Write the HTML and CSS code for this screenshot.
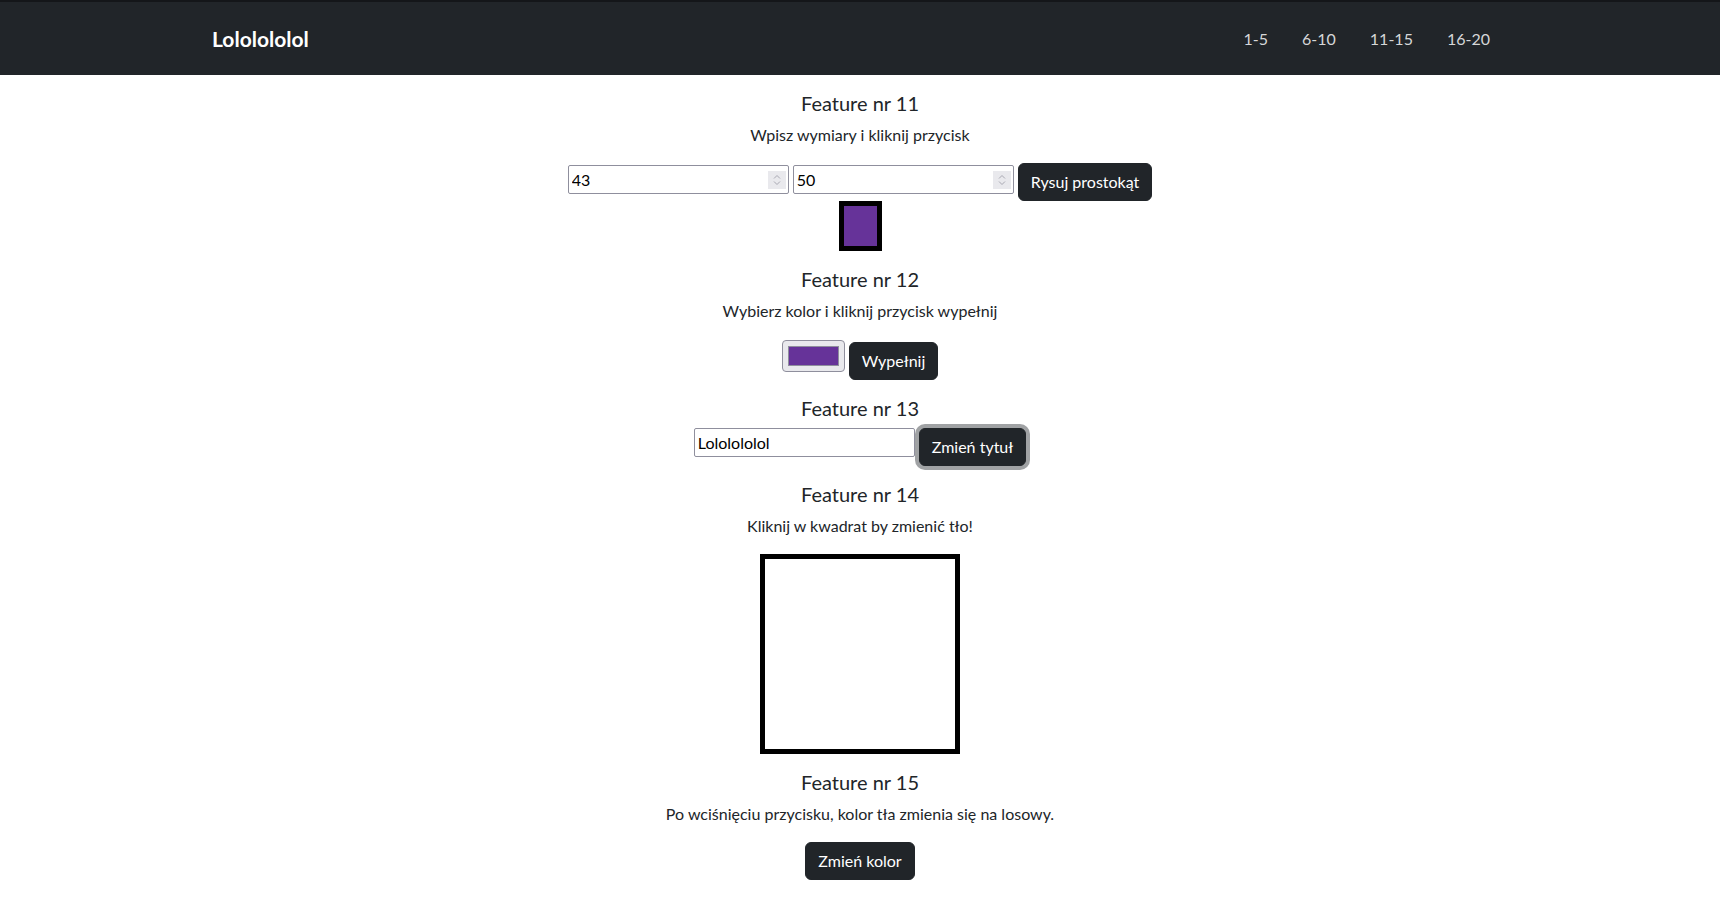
FILE: index.html
```html
<!DOCTYPE html>
<html lang="pl">
<head>
<meta charset="utf-8">
<title>Lololololol</title>
<link rel="stylesheet" href="styles.css">
</head>
<body>
<nav class="navbar">
  <div class="container nav-inner">
    <a class="brand" href="#">Lololololol</a>
    <ul class="nav-links">
      <li><a href="#">1-5</a></li>
      <li><a href="#">6-10</a></li>
      <li><a href="#">11-15</a></li>
      <li><a href="#">16-20</a></li>
    </ul>
  </div>
</nav>
<main class="content">
  <section class="feature">
    <h5 class="title">Feature nr 11</h5>
    <p class="desc">Wpisz wymiary i kliknij przycisk</p>
    <div class="row">
      <span class="num-wrap">
        <input class="field num" type="number" value="43">
        <span class="spin"><svg width="18" height="18" viewBox="0 0 18 18"><path d="M6 7.5 L9 4.5 L12 7.5" fill="none" stroke="#a8a8b2" stroke-width="1"/><path d="M6 10.5 L9 13.5 L12 10.5" fill="none" stroke="#a8a8b2" stroke-width="1"/></svg></span>
      </span>
      <span class="num-wrap">
        <input class="field num" type="number" value="50">
        <span class="spin"><svg width="18" height="18" viewBox="0 0 18 18"><path d="M6 7.5 L9 4.5 L12 7.5" fill="none" stroke="#a8a8b2" stroke-width="1"/><path d="M6 10.5 L9 13.5 L12 10.5" fill="none" stroke="#a8a8b2" stroke-width="1"/></svg></span>
      </span>
      <button class="btn">Rysuj prostokąt</button>
    </div>
    <div class="rect"></div>
  </section>

  <section class="feature">
    <h5 class="title">Feature nr 12</h5>
    <p class="desc">Wybierz kolor i kliknij przycisk wypełnij</p>
    <div class="row row-color">
      <input class="color" type="color" value="#663399">
      <button class="btn">Wypełnij</button>
    </div>
  </section>

  <section class="feature">
    <h5 class="title">Feature nr 13</h5>
    <div class="row row-title">
      <input class="field" type="text" value="Lololololol">
      <button class="btn focused">Zmień tytuł</button>
    </div>
  </section>

  <section class="feature">
    <h5 class="title">Feature nr 14</h5>
    <p class="desc">Kliknij w kwadrat by zmienić tło!</p>
    <div class="square"></div>
  </section>

  <section class="feature">
    <h5 class="title">Feature nr 15</h5>
    <p class="desc">Po wciśnięciu przycisku, kolor tła zmienia się na losowy.</p>
    <div class="row">
      <button class="btn">Zmień kolor</button>
    </div>
  </section>
</main>
</body>
</html>
```

FILE: styles.css
```css
* { box-sizing: border-box; }

html, body {
  margin: 0;
  padding: 0;
}

body {
  font-family: Lato, "Noto Sans", sans-serif;
  font-size: 16px;
  line-height: 1.5;
  color: #212529;
  background: #ffffff;
}

.navbar {
  background: #212529;
  border-top: 2px solid #141619;
  height: 75px;
}

.container {
  max-width: 1320px;
  margin: 0 auto;
  padding: 0 12px;
}

.nav-inner {
  height: 100%;
  display: flex;
  align-items: center;
  justify-content: space-between;
}

.brand {
  color: #ffffff;
  text-decoration: none;
  font-size: 21px;
  font-weight: 700;
  line-height: 30px;
}

.nav-links {
  list-style: none;
  margin: 0 18px 0 0;
  padding: 0;
  display: flex;
}

.nav-links li a {
  display: block;
  color: #d6d7d8;
  text-decoration: none;
  padding: 8px 17px;
  line-height: 24px;
}

.nav-links li:last-child a {
  padding-right: 0;
}

.content {
  text-align: center;
}

.feature {
  padding-top: 16px;
}

.title {
  margin: 0 0 8px;
  font-size: 20px;
  font-weight: 400;
  line-height: 24px;
}

.desc {
  margin: 0 0 16px;
  line-height: 24px;
}

.row {
  display: flex;
  justify-content: center;
  align-items: flex-start;
  gap: 4px;
}

.num-wrap {
  position: relative;
  display: block;
  margin-top: 2px;
}

.field {
  display: block;
  width: 221px;
  height: 29px;
  border: 1px solid #8f8f9d;
  border-radius: 2px;
  padding: 0 3px;
  font-family: inherit;
  font-size: 16px;
  color: #000;
  background: #fff;
  outline: none;
}

.num {
  -moz-appearance: textfield;
  appearance: textfield;
}

.num::-webkit-inner-spin-button,
.num::-webkit-outer-spin-button {
  -webkit-appearance: none;
  margin: 0;
}

.spin {
  position: absolute;
  right: 3px;
  top: 6px;
  width: 18px;
  height: 18px;
  background: #e9e9ed;
  display: block;
}

.spin svg {
  display: block;
}

.btn {
  display: block;
  font-family: inherit;
  font-size: 16px;
  line-height: 24px;
  padding: 6px 12px;
  color: #ffffff;
  background: #212529;
  border: 1px solid #212529;
  border-radius: 6px;
  cursor: pointer;
}

.btn.focused {
  box-shadow: 0 0 0 4px rgba(66, 70, 73, 0.5);
}

.rect {
  width: 43px;
  height: 50px;
  margin: 0 auto;
  border: 5px solid #000;
  background: #663399;
}

.row-color .color {
  margin-top: 1px;
}

.row-color .btn {
  margin-top: 3px;
}

.color {
  display: block;
  -webkit-appearance: none;
  appearance: none;
  width: 63px;
  height: 32px;
  padding: 5px;
  border: 1px solid #8f8f9d;
  border-radius: 4px;
  background: #e9e9ed;
  cursor: pointer;
}

.color::-webkit-color-swatch-wrapper {
  padding: 0;
}

.color::-webkit-color-swatch {
  border: 1px solid #8f8f9d;
  border-radius: 0;
}

.square {
  width: 200px;
  height: 200px;
  margin: 0 auto;
  border: 5px solid #000;
  background: #fff;
}
```
